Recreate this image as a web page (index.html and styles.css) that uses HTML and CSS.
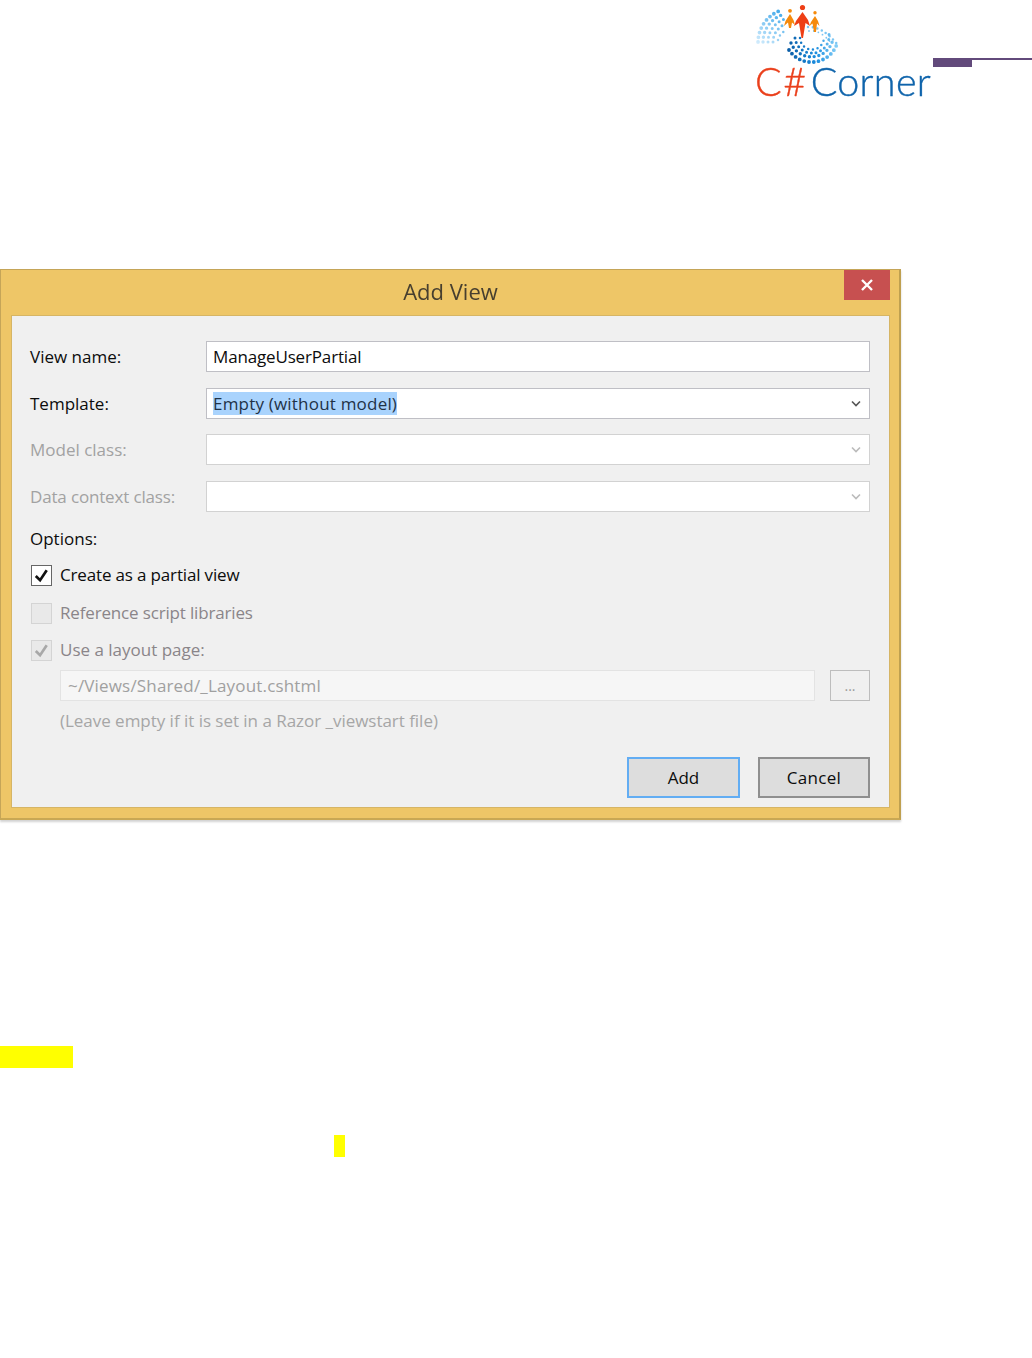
FILE: index.html
```html
<!DOCTYPE html>
<html lang="en">
<head>
<meta charset="utf-8">
<title>Add View</title>
<link rel="stylesheet" href="styles.css">
</head>
<body>
<header class="page-head">
  <div class="logo">
    <svg class="logo-mark" viewBox="750 0 90 66" width="90" height="66" aria-hidden="true">
      <defs>
        <linearGradient id="swirl-light" gradientUnits="userSpaceOnUse" x1="758" y1="45" x2="786" y2="10">
          <stop offset="0" stop-color="#d6eefd"/>
          <stop offset="1" stop-color="#34a2e8"/>
        </linearGradient>
        <linearGradient id="swirl-dark" gradientUnits="userSpaceOnUse" x1="788" y1="50" x2="838" y2="46">
          <stop offset="0" stop-color="#0a5da6"/>
          <stop offset=".55" stop-color="#1c8ee0"/>
          <stop offset="1" stop-color="#8bd2f8"/>
        </linearGradient>
      </defs>
      <g fill="none" stroke-linecap="round">
        <path class="dots lt s1" d="M758 42A34 34 0 0 1 782 10"/>
        <path class="dots lt s2" d="M763 42A29 29 0 0 1 783 14.500"/>
        <path class="dots lt s3" d="M768 42A24 24 0 0 1 785 19"/>
        <path class="dots lt s3" d="M773 42A19 19 0 0 1 786 24"/>
        <path class="dots lt s4" d="M778 40A14 14 0 0 1 785 31"/>
        <path class="dots streak s4" d="M808 27C818 27 826 31 838 45"/>
        <path class="dots streak s5" d="M809 31C817 30 824 34 832 44"/>
        <path class="dots dk s1" d="M789 50A27 27 0 0 0 837 44"/>
        <path class="dots dk s2" d="M791 43A22 22 0 0 0 833 39"/>
        <path class="dots dk s3" d="M795 38A17 17 0 0 0 829 34"/>
        <path class="dots dk s4" d="M800 38A12 12 0 0 0 824 37"/>
      </g>
      <circle class="p-red" cx="802.500" cy="7.500" r="2.600"/>
      <path class="p-red" d="M802.500 12 796 21 794 26 799 23 801.500 38 803 38 805.500 23 810 26 808 20Z"/>
      <circle class="p-org" cx="790" cy="10.800" r="1.900"/>
      <path class="p-org" d="M790 14 785.500 21 784 26 788 22.500 789 28 791 28 792 22.500 795 25 793.500 20Z"/>
      <circle class="p-org" cx="815" cy="12.700" r="1.700"/>
      <path class="p-org" d="M815 16 811 22 809.500 26 812.500 23.500 814 32 816 32 817 23.500 819.500 26 818 21Z"/>
    </svg>
    <div class="logo-text"><span class="logo-c">C#</span><span class="logo-corner">Corner</span></div>
  </div>
  <div class="rule"><span class="rule-tab"></span><span class="rule-line"></span></div>
</header>

<main class="dialog">
  <div class="titlebar">
    <h1 class="title">Add View</h1>
    <button class="close" type="button" aria-label="Close">
      <svg viewBox="0 0 14 12" width="14" height="12"><path d="M2 1 12 11M12 1 2 11"/></svg>
    </button>
  </div>
  <div class="panel">
    <div class="field">
      <label class="label">View name:</label>
      <div class="box"><span class="tight">ManageUserPartial</span></div>
    </div>
    <div class="field">
      <label class="label">Template:</label>
      <div class="box"><span class="selected">Empty (without model)</span>
        <svg class="chev" viewBox="0 0 10 7" width="10" height="7"><path d="M1 1.500 5 5.500 9 1.500"/></svg></div>
    </div>
    <div class="field off">
      <label class="label">Model class:</label>
      <div class="box"><svg class="chev" viewBox="0 0 10 7" width="10" height="7"><path d="M1 1.500 5 5.500 9 1.500"/></svg></div>
    </div>
    <div class="field off">
      <label class="label tight">Data context class:</label>
      <div class="box"><svg class="chev" viewBox="0 0 10 7" width="10" height="7"><path d="M1 1.500 5 5.500 9 1.500"/></svg></div>
    </div>
    <div class="options">Options:</div>
    <div class="check">
      <span class="cb"><svg viewBox="0 0 20 20" width="19" height="19"><path d="M4 10.500 8.500 15 15.500 4.500"/></svg></span>
      <span class="check-text tight">Create as a partial view</span>
    </div>
    <div class="check off">
      <span class="cb"></span>
      <span class="check-text tight">Reference script libraries</span>
    </div>
    <div class="check off">
      <span class="cb"><svg viewBox="0 0 20 20" width="19" height="19"><path d="M4 10.500 8.500 15 15.500 4.500"/></svg></span>
      <span class="check-text">Use a layout page:</span>
    </div>
    <div class="path-row">
      <div class="path">~/Views/Shared/_Layout.cshtml</div>
      <div class="browse">...</div>
    </div>
    <p class="hint">(Leave empty if it is set in a Razor _viewstart file)</p>
    <div class="actions">
      <button class="btn primary" type="button">Add</button>
      <button class="btn cancel" type="button">Cancel</button>
    </div>
  </div>
</main>

<section class="marks">
  <div class="mark mark-a"></div>
  <div class="mark mark-b"></div>
</section>
</body>
</html>
```

FILE: styles.css
```css
* { box-sizing: border-box; }
html, body { margin: 0; padding: 0; background: #fff; }
body {
  width: 1032px;
  height: 1358px;
  overflow: hidden;
  font-family: "Open Sans", "Noto Sans", sans-serif;
}

/* header */
.page-head {
  height: 269px;
  display: flex;
  justify-content: flex-end;
  align-items: flex-start;
}
.logo { width: 177px; flex: none; }
.logo-mark { display: block; margin-left: -6px; filter: blur(.3px); }
.logo-text {
  font-family: Lato, "Open Sans", sans-serif;
  font-weight: 300;
  font-size: 39.500px;
  line-height: 32px;
  white-space: nowrap;
  margin: -1px 0 0 -1px;
  -webkit-text-stroke: .4px;
  filter: blur(.3px);
}
.logo-c { color: #ea3f1b; letter-spacing: 1.500px; margin-right: 3px; }
.logo-corner { color: #0f64ab; letter-spacing: .3px; }
.rule { width: 99px; padding-top: 58px; display: flex; align-items: flex-start; flex: none; }
.rule-tab { width: 39px; height: 9px; background: #624a7b; flex: none; }
.rule-line { flex: 1; height: 2px; background: #624a7b; }
.logo-mark .dots { stroke-dasharray: 0 4.800; }
.lt { stroke: url(#swirl-light); }
.dk { stroke: url(#swirl-dark); }
.streak { stroke: #7cc6f3; }
.s1 { stroke-width: 3.800; }
.s2 { stroke-width: 3.400; }
.s3 { stroke-width: 3; }
.s4 { stroke-width: 2.500; }
.s5 { stroke-width: 1.800; }
.p-red { fill: #ee3f16; }
.p-org { fill: #f58a0c; }

/* dialog */
.dialog {
  width: 901px;
  height: 551px;
  background: #eec667;
  border: 1px solid #c5a558;
  border-right: 2px solid #bfa050;
  border-bottom: 2px solid #c9a854;
  box-shadow: 0 2px 2px rgba(0,0,0,.18);
  padding: 0 9px 10px 10px;
  display: flex;
  flex-direction: column;
  filter: blur(.4px);
}
.titlebar {
  height: 45px;
  flex: none;
  display: flex;
  justify-content: center;
  align-items: flex-start;
  position: relative;
}
.title {
  margin: 6px 0 0;
  font-size: 22px;
  line-height: 30px;
  font-weight: 400;
  color: #473f2f;
}
.close {
  position: absolute;
  top: 0;
  right: 0;
  width: 46px;
  height: 30px;
  padding: 0;
  border: 0;
  background: #c75050;
  display: flex;
  align-items: center;
  justify-content: center;
}
.close path { fill: none; stroke: #fff; stroke-width: 2.400; }
.panel {
  flex: 1;
  background: #f0f0f0;
  border: 1px solid #d6b565;
  padding: 25px 19px 0 18px;
  font-size: 17px;
  color: #0c0c0c;
}
.tight { letter-spacing: -.16px; }
.field {
  display: flex;
  align-items: center;
  height: 31px;
  margin-bottom: 15.500px;
}
.label { width: 176px; flex: none; }
.box {
  flex: 1;
  height: 100%;
  background: #fff;
  border: 1.500px solid #bfbfc5;
  padding-left: 6px;
  display: flex;
  align-items: center;
  justify-content: space-between;
  padding-right: 8px;
}
.off { color: #a2a2a2; }
.off .box { border-color: #d2d2d2; justify-content: flex-end; }
.selected { background: #a9d3fd; color: #1f3247; line-height: 23px; letter-spacing: .2px; }
.chev { flex: none; }
.chev path { fill: none; stroke: #555; stroke-width: 1.600; }
.off .chev path { stroke: #bbb; }
.options { height: 25px; line-height: 25px; margin-top: -1px; margin-bottom: 14px; }
.check {
  display: flex;
  align-items: center;
  height: 21px;
  margin-bottom: 16.500px;
  gap: 8px;
}
.check-text { padding-bottom: 2px; }
.check.off { color: #8a8589; }
.cb {
  width: 21px;
  height: 21px;
  margin-left: 1px;
  flex: none;
  border: 1.500px solid #666;
  background: #fff;
  display: flex;
  align-items: center;
  justify-content: center;
}
.cb path { fill: none; stroke: #111; stroke-width: 2.800; }
.off .cb { background: #e9e9e9; border-color: #d4d4d4; }
.off .cb path { stroke: #a8a8a8; }
.path-row {
  display: flex;
  justify-content: space-between;
  margin: -8px 0 0 30px;
  height: 31px;
}
.path {
  width: 755px;
  background: #f6f6f6;
  border: 1.500px solid #e3e3e3;
  color: #a0a0a0;
  padding-left: 7px;
  line-height: 29px;
  letter-spacing: .17px;
}
.browse {
  width: 40px;
  border: 1.500px solid #bdbdbd;
  background: #f0f0f0;
  color: #9a9a9a;
  text-align: center;
  font-size: 14px;
  line-height: 30px;
}
.hint { margin: 7px 0 0 30px; line-height: 26px; color: #a6a6a6; letter-spacing: -.03px; }
.actions {
  display: flex;
  justify-content: flex-end;
  gap: 18px;
  margin-top: 23px;
}
.btn {
  width: 113px;
  height: 41px;
  padding: 0;
  font: inherit;
  color: #0c0c0c;
  background: #dddddd;
  border: 2px solid #8f8f8f;
}
.primary { border-color: #62adf3; }
.cancel { width: 112px; letter-spacing: .3px; }

/* highlighted blanks */
.marks { padding-top: 226px; }
.mark { background: #ffff00; height: 22px; }
.mark-a { width: 73px; }
.mark-b { width: 11px; margin: 67px 0 0 334px; }
```
